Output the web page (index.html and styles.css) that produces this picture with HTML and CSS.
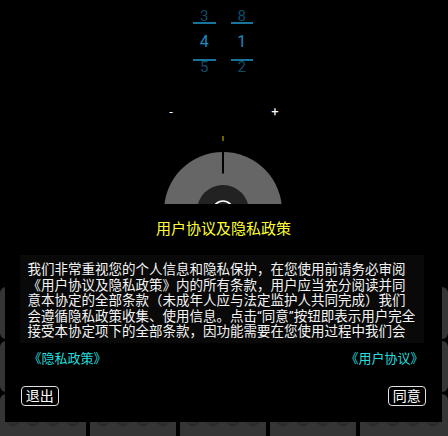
FILE: index.html
```html
<!DOCTYPE html>
<html lang="zh-CN">
<head>
<meta charset="utf-8">
<title>用户协议及隐私政策</title>
<link rel="stylesheet" href="styles.css">
</head>
<body>
<div class="screen">
  <div class="picker">
    <div class="col">
      <div class="num dim top">3</div>
      <div class="rule"></div>
      <div class="num cur">4</div>
      <div class="rule"></div>
      <div class="num dim bot">5</div>
    </div>
    <div class="col">
      <div class="num dim top">8</div>
      <div class="rule"></div>
      <div class="num cur">1</div>
      <div class="rule"></div>
      <div class="num dim bot">2</div>
    </div>
  </div>
  <div class="pm"><span>-</span><span>+</span></div>
  <div class="tick"></div>
  <svg class="gauge" width="118" height="64" viewBox="-59 -59 118 64">
    <circle cx="0" cy="0" r="59" fill="#666666"/>
    <circle cx="0" cy="0" r="26" fill="#222222"/>
    <rect x="-1" y="-59" width="2" height="21.5" fill="#000000"/>
    <circle cx="0" cy="0" r="10" fill="none" stroke="#ffffff" stroke-width="1.6"/>
  </svg>
  <div class="keys">
    <div class="key"></div><div class="key"></div><div class="key"></div><div class="key"></div><div class="key"></div>
    <div class="key"></div><div class="key"></div><div class="key"></div><div class="key"></div><div class="key"></div>
    <div class="key dots"><i></i><i></i><i></i><i></i></div>
    <div class="key dots"><i></i><i></i><i></i><i></i></div>
    <div class="key dots"><i></i><i></i><i></i><i></i></div>
    <div class="key dots"><i></i><i></i><i></i><i></i></div>
    <div class="key dots"><i></i><i></i><i></i><i></i></div>
  </div>

  <div class="dialog">
    <div class="title">用户协议及隐私政策</div>
    <div class="terms">
      <p>我们非常重视您的个人信息和隐私保护，在您使用前请务必审阅<br>《用户协议及隐私政策》内的所有条款，用户应当充分阅读并同<br>意本协定的全部条款（未成年人应与法定监护人共同完成）我们<br>会遵循隐私政策收集、使用信息。点击“同意”按钮即表示用户完全<br>接受本协定项下的全部条款，因功能需要在您使用过程中我们会</p>
    </div>
    <div class="links">
      <span class="link">《隐私政策》</span>
      <span class="link">《用户协议》</span>
    </div>
    <div class="actions">
      <span class="btn">退出</span>
      <span class="btn">同意</span>
    </div>
  </div>
</div>
</body>
</html>
```

FILE: styles.css
```css
html, body {
  margin: 0;
  padding: 0;
  background: #000;
}
body {
  width: 448px;
  height: 436px;
  overflow: hidden;
  font-family: Roboto, "Noto Sans CJK SC", sans-serif;
}
.screen {
  position: relative;
  width: 448px;
  height: 436px;
  display: flex;
  flex-direction: column;
  align-items: center;
  overflow: hidden;
}
.picker {
  display: flex;
  gap: 15px;
  padding-top: 9px;
  margin-left: -2px;
}
.col {
  width: 22.5px;
  display: flex;
  flex-direction: column;
  align-items: center;
}
.num {
  font-family: Roboto, sans-serif;
  text-align: center;
  width: 100%;
}
.dim {
  font-size: 15px;
  line-height: 15px;
  color: #0e4d68;
}
.top { height: 13px; }
.bot { height: 13px; line-height: 13px; }
.cur {
  font-size: 16px;
  height: 35.8px;
  line-height: 35.8px;
  color: #1a8cbd;
}
.rule {
  width: 100%;
  height: 1.5px;
  background: #18749c;
}
.pm {
  display: flex;
  gap: 84px;
  margin-top: 30.4px;
  margin-left: -2px;
  color: #ffffff;
  font-size: 13px;
  line-height: 16px;
}
.pm span {
  width: 20px;
  text-align: center;
}
.tick {
  width: 1.5px;
  height: 5px;
  margin-top: 15.8px;
  margin-left: -2px;
  background: #6b5f00;
}
.gauge {
  display: block;
  margin-top: 10.7px;
  margin-left: -2px;
  flex: none;
}
.keys {
  position: absolute;
  left: 0;
  top: 287px;
  width: 448px;
  display: grid;
  grid-template-columns: 86px 86px 86px 86px 1fr;
  grid-template-rows: 52px 51px 60px;
  column-gap: 4px;
  row-gap: 2px;
}
.key {
  background: #353535;
  border-radius: 6px;
}
.dots {
  display: flex;
  gap: 6px;
  padding: 18px 0 0 6px;
  box-sizing: border-box;
}
.dots i {
  display: block;
  width: 14px;
  height: 14px;
  box-sizing: border-box;
  border-radius: 50%;
  border: 1px solid #262626;
  background: #2f2f2f;
}
.dialog {
  position: absolute;
  left: 5px;
  top: 204px;
  width: 437px;
  height: 218px;
  background: #000;
  box-sizing: border-box;
  padding-top: 14.7px;
  font-family: Roboto, "Noto Sans CJK SC", sans-serif;
}
.title {
  text-align: center;
  color: #ffff33;
  font-size: 15px;
  line-height: 20px;
  height: 20px;
}
.terms {
  margin: 16.3px 0 0 15px;
  width: 404px;
  height: 88px;
  background: #090909;
  box-sizing: border-box;
  padding: 7.4px 0 0 7.6px;
  overflow: hidden;
}
.terms p {
  margin: 0;
  color: #f4f4f4;
  font-size: 13.5px;
  line-height: 15.4px;
  white-space: nowrap;
}
.links {
  display: flex;
  justify-content: space-between;
  margin-top: 6.3px;
  padding: 0 18.5px 0 23.5px;
  font-size: 13px;
  line-height: 20px;
  color: #22dede;
}
.actions {
  display: flex;
  justify-content: space-between;
  margin-top: 16.4px;
  padding: 0 16.3px 0 15.7px;
}
.btn {
  display: block;
  border: 1.5px solid #e2e2e2;
  border-radius: 4px;
  padding: 0 4px;
  font-size: 14px;
  line-height: 18px;
  color: #ffffff;
}
```
